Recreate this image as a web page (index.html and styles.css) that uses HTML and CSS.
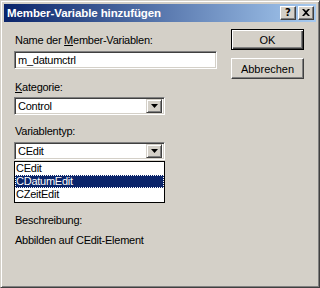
FILE: index.html
```html
<!DOCTYPE html>
<html>
<head>
<meta charset="utf-8">
<link rel="stylesheet" href="styles.css">
</head>
<body>
<div class="window">
  <div class="titlebar">
    <span class="title">Member-Variable hinzufügen</span>
    <div class="tbtns">
      <span class="tbtn">?</span>
      <span class="tbtn tclose"><svg width="8" height="7" viewBox="0 0 8 7"><path d="M0 0h2l2 2 2-2h2L5 3.5 8 7H6L4 5 2 7H0l3-3.5z" fill="#000"/></svg></span>
    </div>
  </div>
  <div class="content">
    <div class="form">
      <div class="label l1">Name der <u>M</u>ember-Variablen:</div>
      <div class="edit">m_datumctrl</div>
      <div class="label l2"><u>K</u>ategorie:</div>
      <div class="combo"><span class="ctext">Control</span><span class="arrow"><svg width="7" height="4" viewBox="0 0 7 4"><path d="M0 0h7L3.5 4z" fill="#000"/></svg></span></div>
      <div class="label l3">Variablentyp:</div>
      <div class="combo"><span class="ctext">CEdit</span><span class="arrow"><svg width="7" height="4" viewBox="0 0 7 4"><path d="M0 0h7L3.5 4z" fill="#000"/></svg></span></div>
      <div class="list">
        <div class="item">CEdit</div>
        <div class="item sel">CDatumEdit</div>
        <div class="item">CZeitEdit</div>
      </div>
      <div class="label l4">Beschreibung:</div>
      <div class="label l5">Abbilden auf CEdit-Element</div>
    </div>
    <div class="buttons">
      <div class="btn default"><span>OK</span></div>
      <div class="btn">Abbrechen</div>
    </div>
  </div>
</div>
</body>
</html>
```
FILE: styles.css
```css
* { box-sizing: border-box; }
html, body { margin: 0; padding: 0; }
body { width: 320px; height: 288px; overflow: hidden; background: #D4D0C8; font-family: "Liberation Sans", Arial, sans-serif; font-size: 11px; color: #000; }
.window {
  width: 320px; height: 288px; background: #D4D0C8;
  border: 1px solid; border-color: #D4D0C8 #404040 #404040 #D4D0C8;
  padding: 3px;
  box-shadow: inset 1px 1px 0 #fff, inset -1px -1px 0 #808080;
  display: flex; flex-direction: column;
}
.titlebar {
  height: 18px; display: flex; align-items: center; justify-content: space-between;
  background: linear-gradient(to right, #0A246A, #A6CAF0);
  padding: 0 2px 0 3px;
}
.title { color: #fff; font-family: "Liberation Sans", Arial, sans-serif; font-weight: bold; font-size: 11.5px; letter-spacing: -0.1px; }
.tbtns { display: flex; gap: 2px; }
.tbtn {
  width: 16px; height: 14px; background: #D4D0C8;
  border: 1px solid; border-color: #fff #404040 #404040 #fff;
  box-shadow: inset -1px -1px 0 #808080;
  display: flex; align-items: center; justify-content: center;
  font-family: "DejaVu Sans", sans-serif; font-weight: bold; font-size: 10px; line-height: 1;
  padding-bottom: 1px;
}
.content { display: flex; padding: 0 0 0 10px; }
.form { width: 203px; display: flex; flex-direction: column; letter-spacing: -0.25px; }
.label { height: 13px; line-height: 13px; padding-left: 1px; white-space: nowrap; }
.label u { text-decoration: underline; text-underline-offset: 1px; }
.l1 { margin-top: 12px; }
.l2 { margin-top: 12px; }
.l3 { margin-top: 10px; }
.l4 { margin-top: 11px; }
.l5 { margin-top: 7px; }
.edit, .combo {
  height: 18px; background: #fff;
  border: 1px solid; border-color: #808080 #fff #fff #808080;
  box-shadow: inset 1px 1px 0 #404040, inset -1px -1px 0 #D4D0C8;
  line-height: 14px; padding: 1px 3px; margin-top: 4px;
}
.edit { width: 203px; }
.combo { width: 151px; display: flex; justify-content: space-between; padding-right: 2px; margin-top: 4px; }
.l2 + .combo { margin-top: 3px; }
.arrow {
  width: 16px; height: 14px; background: #D4D0C8;
  border: 1px solid; border-color: #D4D0C8 #404040 #404040 #D4D0C8;
  box-shadow: inset 1px 1px 0 #fff, inset -1px -1px 0 #808080;
  display: flex; align-items: center; justify-content: center;
}
.list { width: 151px; border: 1px solid #000; background: #fff; padding: 0 0 1px; margin-top: 1px; }
.item { height: 13px; line-height: 13px; padding-left: 1px; }
.item.sel { background: #0A246A; color: #fff; outline: 1px dotted #fff; outline-offset: -1px; }
.buttons { margin-left: 14px; padding-top: 7px; display: flex; flex-direction: column; gap: 8px; }
.btn {
  width: 73px; height: 21px; background: #D4D0C8;
  border: 1px solid; border-color: #fff #404040 #404040 #fff;
  box-shadow: inset -1px -1px 0 #808080;
  display: flex; align-items: center; justify-content: center;
}
.btn.default { border: 1px solid #000; box-shadow: inset 1px 1px 0 #fff, inset -1px -1px 0 #404040, inset -2px -2px 0 #808080; }
```
